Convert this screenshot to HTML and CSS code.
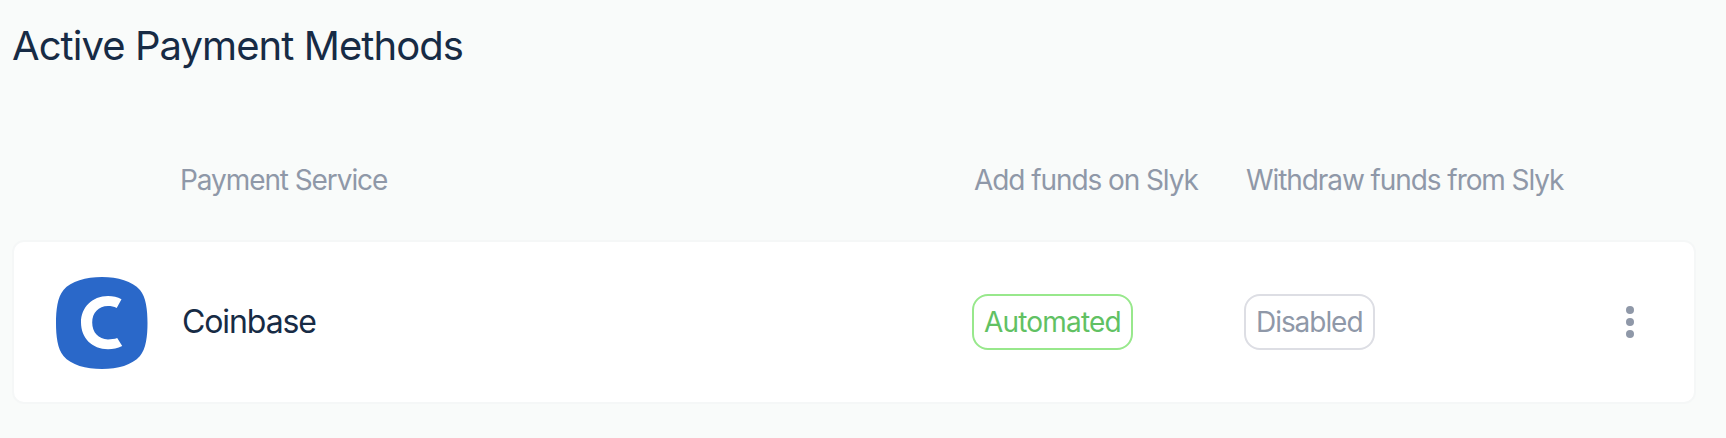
FILE: index.html
```html
<!DOCTYPE html>
<html lang="en">
<head>
    <meta charset="UTF-8">
    <title>Active Payment Methods</title>
    <link rel="stylesheet" href="styles.css">
</head>
<body>
    <main class="payment-methods">
        <h1 class="title">Active Payment Methods</h1>

        <div class="row table-header">
            <span class="header-service">Payment Service</span>
            <span class="header-add">Add funds on Slyk</span>
            <span class="header-withdraw">Withdraw funds from Slyk</span>
        </div>

        <div class="row card">
            <svg class="logo" viewBox="0 0 92 92">
                <path fill="#2a68c9" d="M46 0C62 0 76 4 84 13C90 20 91.5 33 91.5 46C91.5 59 90 72 84 79C76 88 62 92 46 92C30 92 15 88 7.500 79C1.500 72 0 59 0 46C0 33 1.500 20 7.500 13C15 4 30 0 46 0Z"/>
                <path fill="#fff" d="M65.500 22.300L60.700 30.900C58 29.600 55 29.100 52 29.100C42.500 29.100 36.200 36 36.200 45.600C36.200 55.500 42.500 62.400 52 62.400C55 62.400 58.500 62.100 61.200 61L66.200 69.100C61.500 71.400 57 72.300 52 72.300C36 72.300 25 61 25 45.600C25 30.500 36 19 52 19C57 19 61.500 20 65.500 22.300Z"/>
            </svg>
            <span class="name">Coinbase</span>
            <div><span class="badge badge-automated">Automated</span></div>
            <div><span class="badge badge-disabled">Disabled</span></div>
            <button class="menu" aria-label="More options">
                <svg width="8" height="32" viewBox="0 0 8 32">
                    <circle cx="4" cy="4" r="4"/>
                    <circle cx="4" cy="16" r="4"/>
                    <circle cx="4" cy="28" r="4"/>
                </svg>
            </button>
        </div>
    </main>
</body>
</html>
```

FILE: styles.css
```css
* {
    box-sizing: border-box;
}

body {
    margin: 0;
    background: #f9fbfa;
    color: #172b45;
    font-family: Inter, sans-serif;
}

.payment-methods {
    width: 1684px;
    margin-left: 12px;
    padding-top: 22px;
}

.title {
    margin: 0;
    font-size: 40px;
    font-weight: 400;
    line-height: 48px;
    letter-spacing: -0.93px;
}

.row {
    display: grid;
    grid-template-columns: 124px 792px 272px 382px 1fr;
    align-items: center;
    padding-left: 42px;
    border: 2px solid transparent;
}

.table-header {
    height: 40px;
    margin-top: 90px;
    color: #8f98a8;
    font-size: 28px;
    letter-spacing: -1.08px;
}

.header-service {
    grid-column: 2;
}

.header-add,
.header-withdraw {
    padding-left: 2px;
}

.card {
    height: 164px;
    margin-top: 40px;
    background: #fff;
    border-color: #f5f7f7;
    border-radius: 12px;
}

.logo {
    width: 92px;
    height: 92px;
    margin-top: 2px;
}

.name {
    padding-left: 2px;
    padding-bottom: 2px;
    font-size: 32px;
    letter-spacing: -1.1px;
}

.badge {
    display: inline-block;
    height: 56px;
    padding: 0 10px;
    border: 2px solid;
    border-radius: 16px;
    font-size: 28px;
    line-height: 52px;
    letter-spacing: -0.8px;
    vertical-align: middle;
}

.badge-automated {
    border-color: #98e88c;
    color: #61c163;
}

.badge-disabled {
    border-color: #dddee4;
    color: #8f98a8;
    letter-spacing: -1.05px;
}

.menu {
    display: flex;
    width: 8px;
    padding: 0;
    background: none;
    border: none;
    cursor: pointer;
}

.menu svg {
    fill: #8f98a8;
}
```
